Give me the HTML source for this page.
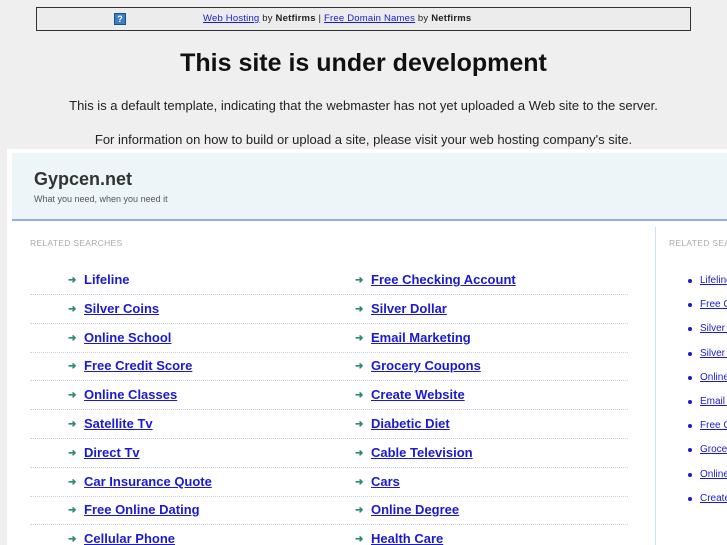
<!DOCTYPE html>
<html><head><style>
*{margin:0;padding:0;box-sizing:border-box}
html,body{width:727px;height:545px;overflow:hidden}
body{background:#efefef;font-family:"Liberation Sans",sans-serif;position:relative}
.top{position:absolute;left:36px;top:7px;width:655px;height:24px;background:#ececec;border:1px solid #333;font-size:9.5px;color:#222}
.top .q{position:absolute;left:77px;top:5px;width:12px;height:12px;background:#3a7fc8;border:1px solid #1a4f88;color:#fff;font-size:9px;font-weight:bold;text-align:center;line-height:10px}
.top .t{position:absolute;left:166px;top:5px;letter-spacing:.2px}
.top a{color:#1a1ad0;text-decoration:underline}
h1{position:absolute;top:49px;left:0;width:727px;text-align:center;font-size:25px;font-weight:bold;color:#111}
.p{position:absolute;left:0;width:727px;text-align:center;font-size:13px;color:#222}
.panel{position:absolute;left:7px;top:149px;width:720px;height:400px;background:#fff;overflow:hidden}
.hdr{position:absolute;left:5px;top:4px;width:720px;height:68px;background:#eef5f8;border-bottom:2px solid #8fb0e6}
.hdr .n{position:absolute;left:22px;top:16px;font-size:18px;color:#333;font-weight:bold}
.hdr .s{position:absolute;left:22px;top:41px;font-size:9px;color:#555}
.lbl{position:absolute;font-size:8.5px;color:#aaa;letter-spacing:.3px;white-space:nowrap}
.vl{position:absolute;left:648px;top:78px;width:1px;height:330px;background:#cfe0f4}
.row{position:absolute;left:23px;width:598px;height:29px;border-bottom:1px dotted #c9d3e6}
.it{position:absolute;font-size:13px;font-weight:bold;color:#1a1ad0;text-decoration:underline;white-space:nowrap}
.ar{position:absolute;font-size:10px;color:#2a8a7a;font-weight:bold}
.sb{position:absolute;font-size:10px;color:#1a1ad0;text-decoration:underline;white-space:nowrap}
.bu{position:absolute;left:688px;width:4px;height:4px;border-radius:2px;background:#1a1ad0}
#rows{position:absolute;left:0;top:0;width:727px;height:545px;overflow:hidden}
</style></head><body>
<div class="top"><div class="q">?</div><div class="t"><a>Web Hosting</a> by <b>Netfirms</b> | <a>Free Domain Names</a> by <b>Netfirms</b></div></div>
<h1>This site is under development</h1>
<div class="p" style="top:98px">This is a default template, indicating that the webmaster has not yet uploaded a Web site to the server.</div>
<div class="p" style="top:132px">For information on how to build or upload a site, please visit your web hosting company's site.</div>
<div class="panel">
<div class="hdr"><div class="n">Gypcen.net</div><div class="s">What you need, when you need it</div></div>
<div class="lbl" style="left:23px;top:89px">RELATED SEARCHES</div>
<div class="lbl" style="left:662px;top:89px">RELATED SEARCHES</div>
<div class="vl"></div>
</div>
<div id="rows"></div>
<script>
var L=["Lifeline","Silver Coins","Online School","Free Credit Score","Online Classes","Satellite Tv","Direct Tv","Car Insurance Quote","Free Online Dating","Cellular Phone"];
var R=["Free Checking Account","Silver Dollar","Email Marketing","Grocery Coupons","Create Website","Diabetic Diet","Cable Television","Cars","Online Degree","Health Care"];
var S=["Lifeline","Free Checking Account","Silver Coins","Silver Dollar","Online School","Email Marketing","Free Credit Score","Grocery Coupons","Online Classes","Create Website"];
var h="";
for(var i=0;i<10;i++){var y=272+i*28.8;
h+='<div class="row" style="left:30px;top:'+(y-6)+'px"></div>';
h+='<div class="ar" style="left:68px;top:'+(y+3)+'px">&#10140;</div><div class="it" style="left:84px;top:'+(y)+'px'+(i==0?';text-decoration:none':'')+'">'+L[i]+'</div>';
h+='<div class="ar" style="left:355px;top:'+(y+3)+'px">&#10140;</div><div class="it" style="left:371px;top:'+(y)+'px">'+R[i]+'</div>';
var z=275+i*24.2;
h+='<div class="bu" style="top:'+(z+4)+'px"></div><div class="sb" style="left:700px;top:'+z+'px">'+S[i]+'</div>';}
document.getElementById("rows").innerHTML=h;
</script>
</body></html>
